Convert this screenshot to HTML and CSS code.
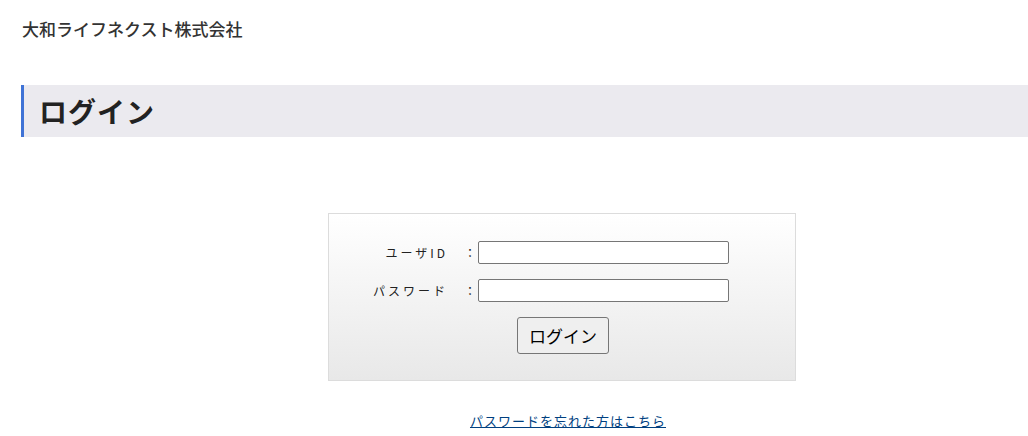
FILE: index.html
```html
<!DOCTYPE html>
<html lang="ja">
<head>
    <meta charset="UTF-8">
    <title>ログイン</title>
    <link rel="stylesheet" href="styles.css">
</head>
<body>
    <header class="site-header">
        <div class="logo">大和ライフネクスト株式会社</div>
    </header>

    <h1 class="page-title">ログイン</h1>

    <form class="login-box">
        <div class="login-row">
            <label class="login-label" for="userId">ユーザID</label>
            <span class="login-colon">：</span>
            <input class="login-input" type="text" id="userId">
        </div>
        <div class="login-row">
            <label class="login-label" for="password">パスワード</label>
            <span class="login-colon">：</span>
            <input class="login-input" type="password" id="password">
        </div>
        <div class="login-actions">
            <button class="login-button" type="button">ログイン</button>
        </div>
    </form>

    <p class="forgot">
        <a href="#">パスワードを忘れた方はこちら</a>
    </p>
</body>
</html>
```

FILE: styles.css
```css
body {
    margin: 0;
    padding: 0 0 0 21px;
    background-color: #fff;
    color: #222;
    font-family: "Noto Sans CJK JP", "Noto Sans", sans-serif;
}

.site-header {
    height: 85px;
    padding-top: 17px;
    box-sizing: border-box;
}

.logo {
    font-size: 17px;
    font-weight: 500;
    line-height: 24px;
    color: #333;
    padding-left: 1px;
    letter-spacing: 0;
}

.page-title {
    margin: 0;
    height: 52px;
    line-height: 52px;
    background-color: #ebeaef;
    border-left: 3px solid #3f73d6;
    padding-left: 15px;
    font-size: 28px;
    font-weight: bold;
    color: #222;
    letter-spacing: 1px;
}

.login-box {
    width: 466px;
    margin: 76px 0 0 307px;
    padding: 27px 0 26px;
    border: 1px solid #dcdcdc;
    background: linear-gradient(to bottom, #fff, #e8e8e8);
    box-sizing: content-box;
}

.login-row {
    display: grid;
    grid-template-columns: 119px 30px 251px;
    align-items: center;
    margin-bottom: 15px;
    height: 23px;
}

.login-label {
    text-align: right;
    font-family: "Noto Sans CJK JP", monospace;
    font-size: 12px;
    letter-spacing: 3px;
    color: #222;
}

.login-colon {
    text-align: right;
    font-size: 12px;
    padding-right: 2px;
}

.login-input {
    width: 251px;
    height: 23px;
    box-sizing: border-box;
    border: 1px solid #767676;
    border-radius: 2px;
    background: #fff;
    margin: 0;
}

.login-actions {
    text-align: center;
    padding-left: 2px;
}

.login-button {
    width: 92px;
    height: 37px;
    font-family: "Noto Sans CJK JP", sans-serif;
    font-size: 17px;
    color: #000;
    background-color: #efefef;
    border: 1px solid #767676;
    border-radius: 3px;
    padding: 0;
}

.forgot {
    margin: 30px 0 0 307px;
    width: 468px;
    text-align: center;
    font-size: 13px;
    padding-left: 12px;
    box-sizing: border-box;
}

.forgot a {
    color: #003f7f;
    letter-spacing: 1px;
}
```
